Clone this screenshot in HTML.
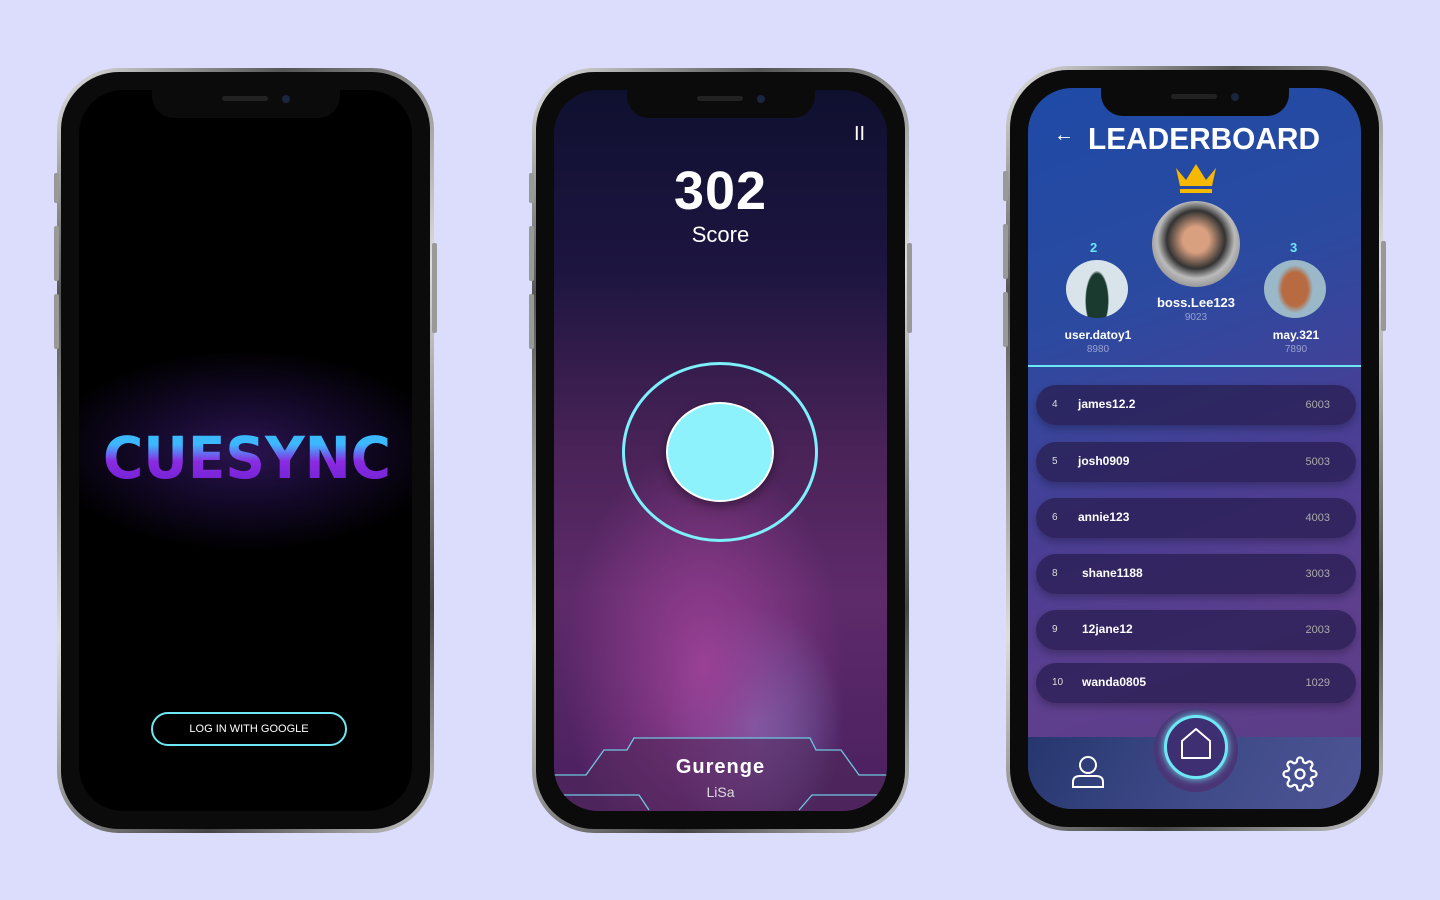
<!DOCTYPE html>
<html><head><meta charset="utf-8"><style>
*{margin:0;padding:0;box-sizing:border-box}
body{width:1440px;height:900px;background:#dcdcfd;position:relative;overflow:hidden;font-family:"Liberation Sans",sans-serif}
.phone{position:absolute;width:377px;height:765px;border-radius:62px;background:linear-gradient(135deg,#e8e8e8,#555 20%,#ddd 50%,#444 80%,#ccc);padding:4px}
.phone .in{width:100%;height:100%;border-radius:58px;background:#0b0b0b;padding:14px;position:relative}
.scr{position:absolute;left:18px;top:18px;right:18px;bottom:18px;border-radius:44px;overflow:hidden}
.notch{position:absolute;left:50%;top:14px;margin-left:-94px;width:188px;height:32px;background:#0b0b0b;border-radius:0 0 22px 22px;z-index:5}
.notch:before{content:"";position:absolute;left:70px;top:10px;width:46px;height:5px;border-radius:3px;background:#222}
.notch:after{content:"";position:absolute;left:130px;top:9px;width:8px;height:8px;border-radius:50%;background:#1a2540}
.btn{position:absolute;width:5px;background:#999;border-radius:2px}
.row{position:absolute;left:8px;width:320px;height:40px;border-radius:20px;background:rgba(40,30,80,.75);box-shadow:0 4px 8px rgba(0,0,0,.25);color:#fff;font-size:12px}
.row .n{position:absolute;left:16px;top:14px;font-size:10px;color:#ddd}
.row .u{position:absolute;left:42px;top:12px;font-weight:bold}
.row .s{position:absolute;right:26px;top:14px;font-size:11px;color:#aaa}
</style></head><body>

<!-- Phone 1 -->
<div class="phone" style="left:57px;top:68px">
<div class="btn" style="left:-3px;top:105px;height:30px"></div><div class="btn" style="left:-3px;top:158px;height:55px"></div><div class="btn" style="left:-3px;top:226px;height:55px"></div><div class="btn" style="right:-3px;top:175px;height:90px"></div>
<div class="in">
<div class="scr" style="background:radial-gradient(ellipse 200px 100px at 50% 50%,#2a1450,#120826 55%,#000 100%)">
<svg style="position:absolute;left:0;top:320px" width="341" height="80"><defs><linearGradient id="lg" x1="0" y1="0" x2="0" y2="1"><stop offset="0.3" stop-color="#3cb8ff"/><stop offset="0.55" stop-color="#8a2be2"/><stop offset="1" stop-color="#6a1fd0"/></linearGradient></defs><text x="24" y="68" textLength="288" lengthAdjust="spacingAndGlyphs" font-family="DejaVu Sans" font-size="58" font-weight="bold" fill="url(#lg)">CUESYNC</text></svg>
<div style="position:absolute;left:72px;top:622px;width:196px;height:34px;border:2px solid #6ee7f5;border-radius:17px;color:#fff;font-size:11px;text-align:center;line-height:30px">LOG IN WITH GOOGLE</div>
</div><div class="notch"></div></div></div>

<!-- Phone 2 -->
<div class="phone" style="left:532px;top:68px">
<div class="btn" style="left:-3px;top:105px;height:30px"></div><div class="btn" style="left:-3px;top:158px;height:55px"></div><div class="btn" style="left:-3px;top:226px;height:55px"></div><div class="btn" style="right:-3px;top:175px;height:90px"></div>
<div class="in">
<div class="scr" style="background:radial-gradient(ellipse 140px 220px at 45% 80%,#9a4095,transparent),radial-gradient(ellipse 90px 120px at 60% 88%,#6a70b0,transparent),linear-gradient(#0f1030 0%,#1d1540 25%,#4a2358 50%,#5e2a6a 70%,#4a2060 100%)">
<div style="position:absolute;left:300px;top:33px;color:#fff;font-size:20px">II</div>
<div style="position:absolute;left:0;width:100%;top:70px;text-align:center;color:#fff;font-size:54px;font-weight:bold;letter-spacing:1px">302</div>
<div style="position:absolute;left:0;width:100%;top:132px;text-align:center;color:#fff;font-size:22px">Score</div>
<div style="position:absolute;left:68px;top:272px;width:196px;height:180px;border:3px solid #7ef0fb;border-radius:50%"></div>
<div style="position:absolute;left:112px;top:312px;width:108px;height:100px;background:#8ef2fd;border:2px solid #fff;border-radius:50%;box-shadow:0 4px 10px rgba(0,0,0,.4)"></div>
<svg style="position:absolute;left:0;top:640px" width="341" height="90"><path d="M0 45 H32 L50 20 H73 L80 8 H256 L262 20 H287 L305 45 H341 V90 H0Z" fill="rgba(80,40,90,.55)"/><path d="M0 45 H32 L50 20 H73 L80 8 H256 L262 20 H287 L305 45 H341" stroke="#6fc7e0" stroke-width="1.3" fill="none"/><path d="M0 65 H85 L95 80 M341 65 H258 L245 80" stroke="#6fc7e0" stroke-width="1.3" fill="none"/></svg>
<div style="position:absolute;left:0;width:100%;top:666px;text-align:center;color:#fff;font-size:20px;font-weight:bold;letter-spacing:1px">Gurenge</div>
<div style="position:absolute;left:0;width:100%;top:694px;text-align:center;color:#ddd;font-size:14px">LiSa</div>
</div><div class="notch"></div></div></div>

<!-- Phone 3 -->
<div class="phone" style="left:1006px;top:66px">
<div class="btn" style="left:-3px;top:105px;height:30px"></div><div class="btn" style="left:-3px;top:158px;height:55px"></div><div class="btn" style="left:-3px;top:226px;height:55px"></div><div class="btn" style="right:-3px;top:175px;height:90px"></div>
<div class="in">
<div class="scr" style="background:linear-gradient(160deg,#1e4aa6 0%,#2b4aa0 30%,#4a3e94 55%,#5e3f8e 75%,#5a3b82 100%)">
<div style="position:absolute;left:26px;top:36px;color:#fff;font-size:20px">←</div>
<svg style="position:absolute;left:60px;top:28px" width="240" height="40"><text x="0" y="33" textLength="232" lengthAdjust="spacingAndGlyphs" font-family="Liberation Sans" font-size="31" font-weight="bold" fill="#fff">LEADERBOARD</text></svg>
<svg style="position:absolute;left:146px;top:74px" width="44" height="32"><path d="M2 6 L12 18 L22 2 L32 18 L42 6 L38 24 H6Z" fill="#f6b800"/><rect x="6" y="27" width="32" height="4" fill="#f6b800"/></svg>
<div style="position:absolute;left:124px;top:113px;width:88px;height:86px;border-radius:50%;background:radial-gradient(circle at 50% 45%,#d9a080 20%,#333 45%,#bbb 60%,#555)"></div>
<div style="position:absolute;left:0;width:336px;top:207px;text-align:center;color:#fff;font-size:13px;font-weight:bold">boss.Lee123</div>
<div style="position:absolute;left:0;width:336px;top:224px;text-align:center;color:#9aa0d0;font-size:10px">9023</div>
<div style="position:absolute;left:62px;top:152px;color:#6ee7f5;font-size:13px;font-weight:bold">2</div>
<div style="position:absolute;left:38px;top:172px;width:62px;height:58px;border-radius:50%;background:radial-gradient(ellipse 12px 30px at 50% 70%,#1a3a30 90%,transparent),#d8e4ea"></div>
<div style="position:absolute;left:30px;top:240px;width:80px;text-align:center;color:#fff;font-size:12px;font-weight:bold">user.datoy1</div>
<div style="position:absolute;left:30px;top:256px;width:80px;text-align:center;color:#9aa0d0;font-size:10px">8980</div>
<div style="position:absolute;left:262px;top:152px;color:#6ee7f5;font-size:13px;font-weight:bold">3</div>
<div style="position:absolute;left:236px;top:172px;width:62px;height:58px;border-radius:50%;background:radial-gradient(ellipse 18px 24px at 50% 50%,#b86a40 70%,transparent),#9ab8c8"></div>
<div style="position:absolute;left:228px;top:240px;width:80px;text-align:center;color:#fff;font-size:12px;font-weight:bold">may.321</div>
<div style="position:absolute;left:228px;top:256px;width:80px;text-align:center;color:#9aa0d0;font-size:10px">7890</div>
<div style="position:absolute;left:0;top:277px;width:100%;height:2px;background:#6ee7f5"></div>
<div class="row" style="top:297px"><span class="n">4</span><span class="u">james12.2</span><span class="s">6003</span></div>
<div class="row" style="top:354px"><span class="n">5</span><span class="u">josh0909</span><span class="s">5003</span></div>
<div class="row" style="top:410px"><span class="n">6</span><span class="u">annie123</span><span class="s">4003</span></div>
<div class="row" style="top:466px"><span class="n">8</span><span class="u" style="left:46px">shane1188</span><span class="s">3003</span></div>
<div class="row" style="top:522px"><span class="n">9</span><span class="u" style="left:46px">12jane12</span><span class="s">2003</span></div>
<div class="row" style="top:575px"><span class="n">10</span><span class="u" style="left:46px">wanda0805</span><span class="s">1029</span></div>
<div style="position:absolute;left:0;top:649px;width:100%;height:80px;background:linear-gradient(120deg,#26366e,#3e4a88 50%,#4f5596)"></div>
<div style="position:absolute;left:126px;top:620px;width:84px;height:84px;border-radius:50%;background:#4a3576"></div>
<div style="position:absolute;left:136px;top:627px;width:64px;height:64px;border-radius:50%;border:3px solid #6ee7f5;background:#3e2e72;box-shadow:0 0 8px #6ee7f5"></div>
<svg style="position:absolute;left:150px;top:638px" width="36" height="36"><path d="M4 32 V15 L18 3 L32 15 V32Z" fill="none" stroke="#fff" stroke-width="2" stroke-linejoin="round"/></svg>
<svg style="position:absolute;left:42px;top:666px" width="36" height="36"><circle cx="18" cy="11" r="8" fill="none" stroke="#fff" stroke-width="2"/><path d="M3 33 V28 Q3 22 10 22 H26 Q33 22 33 28 V33Z" fill="none" stroke="#fff" stroke-width="2"/></svg>
<svg style="position:absolute;left:254px;top:668px" width="36" height="36" viewBox="0 0 24 24"><circle cx="12" cy="12" r="3" fill="none" stroke="#fff" stroke-width="1.5"/><path d="M19.4 15a1.650 1.650 0 0 0 .33 1.820l.06.06a2 2 0 1 1-2.830 2.830l-.06-.06a1.650 1.650 0 0 0-1.820-.33 1.650 1.650 0 0 0-1 1.510V21a2 2 0 0 1-4 0v-.09A1.650 1.650 0 0 0 9 19.4a1.650 1.650 0 0 0-1.820.33l-.06.06a2 2 0 1 1-2.830-2.830l.06-.06a1.650 1.650 0 0 0 .33-1.820 1.650 1.650 0 0 0-1.510-1H3a2 2 0 0 1 0-4h.09A1.650 1.650 0 0 0 4.6 9a1.650 1.650 0 0 0-.33-1.820l-.06-.06a2 2 0 1 1 2.830-2.830l.06.06a1.650 1.650 0 0 0 1.820.33H9a1.650 1.650 0 0 0 1-1.510V3a2 2 0 0 1 4 0v.09a1.650 1.650 0 0 0 1 1.510 1.650 1.650 0 0 0 1.820-.33l.06-.06a2 2 0 1 1 2.830 2.830l-.06.06a1.650 1.650 0 0 0-.33 1.820V9a1.650 1.650 0 0 0 1.510 1H21a2 2 0 0 1 0 4h-.09a1.650 1.650 0 0 0-1.510 1z" fill="none" stroke="#fff" stroke-width="1.5"/></svg>
</div><div class="notch"></div></div></div>
</body></html>
